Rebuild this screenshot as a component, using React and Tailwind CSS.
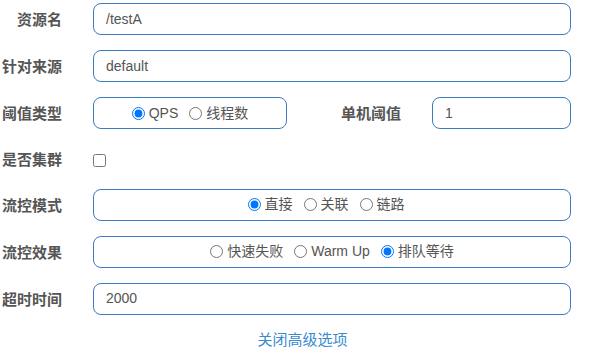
import React from "react";

const font = { fontFamily: '"Liberation Sans", "Noto Sans CJK SC", sans-serif' };

function Label({ children }) {
  return (
    <div className="w-[62px] shrink-0 text-right text-[15px] font-bold text-[#555] pt-[3px] whitespace-nowrap">
      {children}
    </div>
  );
}

function Radio({ checked, label, last }) {
  return (
    <label className={"flex items-center " + (last ? "" : "mr-[11px]")}>
      <input type="radio" checked={checked} readOnly className="m-0 mr-[4px] w-[13px] h-[13px]" />
      <span>{label}</span>
    </label>
  );
}

function Box({ children, className = "" }) {
  return (
    <div className={"h-[32px] border border-[#3a7cc2] rounded-lg flex items-center text-[14px] text-[#555] " + className}>
      {children}
    </div>
  );
}

export default function App() {
  return (
    <div className="w-[613px] h-[351px] bg-white pt-[3px] flex flex-col" style={font}>
      <div className="flex items-center mb-[15px]">
        <Label>资源名</Label>
        <Box className="ml-[31px] w-[478px] pl-[12px]">/testA</Box>
      </div>
      <div className="flex items-center mb-[15px]">
        <Label>针对来源</Label>
        <Box className="ml-[31px] w-[478px] pl-[12px]">default</Box>
      </div>
      <div className="flex items-center mb-[15px]">
        <Label>阈值类型</Label>
        <Box className="ml-[31px] w-[194px] justify-center">
          <Radio checked label="QPS" />
          <Radio label="线程数" last />
        </Box>
        <div className="w-[114px] text-right text-[15px] font-bold text-[#555] pt-[3px]">单机阈值</div>
        <Box className="ml-[31px] w-[139px] pl-[12px]">1</Box>
      </div>
      <div className="flex items-center h-[32px] mb-[15px]">
        <Label>是否集群</Label>
        <div className="ml-[31px] flex items-center mt-[4px]">
          <input type="checkbox" readOnly className="m-0 w-[13px] h-[13px]" />
        </div>
      </div>
      <div className="flex items-center mb-[15px]">
        <Label>流控模式</Label>
        <Box className="ml-[31px] w-[478px] justify-center pr-[12px]">
          <Radio checked label="直接" />
          <Radio label="关联" />
          <Radio label="链路" last />
        </Box>
      </div>
      <div className="flex items-center mb-[15px]">
        <Label>流控效果</Label>
        <Box className="ml-[31px] w-[478px] justify-center">
          <Radio label="快速失败" />
          <Radio label="Warm Up" />
          <Radio checked label="排队等待" last />
        </Box>
      </div>
      <div className="flex items-center">
        <Label>超时时间</Label>
        <Box className="ml-[31px] w-[478px] pl-[12px]">2000</Box>
      </div>
      <div className="mt-[14px] text-center text-[15px] text-[#3a8ad0] pr-[8px]">关闭高级选项</div>
    </div>
  );
}
